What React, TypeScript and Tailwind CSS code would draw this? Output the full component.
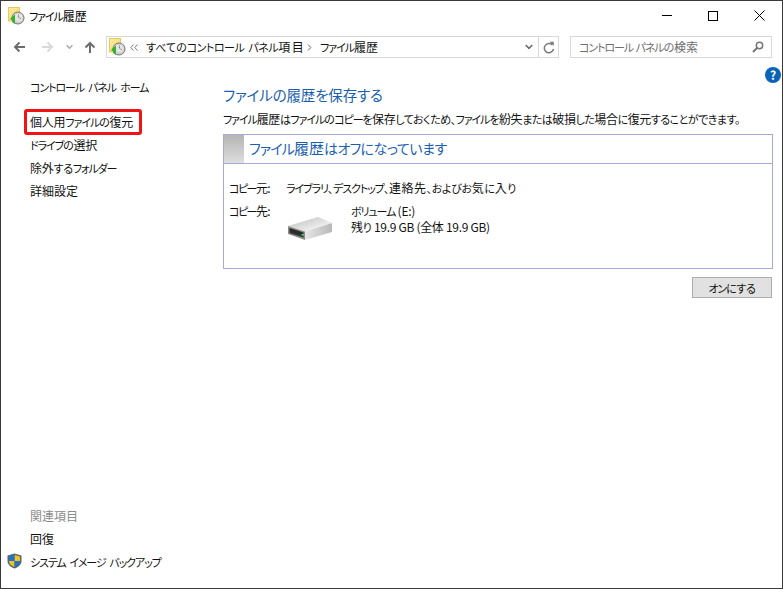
const font = { fontFamily: '"Noto Sans CJK JP", "Noto Sans", sans-serif' };

type Mode = "normal" | "big" | "tight" | "loose" | "para";

const kataClass: Record<Mode, string> = {
  normal: "text-[11px] tracking-[-1.1px]",
  big: "text-[14px] tracking-[-0.9px]",
  tight: "text-[11px] tracking-[-1.5px]",
  loose: "text-[11px] tracking-[-0.5px]",
  para: "text-[11px] tracking-[-1.1px]",
};
const hiraClass: Record<Mode, string> = {
  normal: "text-[11px] tracking-[-0.3px]",
  big: "text-[14px] tracking-[-0.4px]",
  tight: "text-[11px] tracking-[-0.3px]",
  loose: "text-[11px] tracking-[0px]",
  para: "text-[11px] tracking-[-0.5px]",
};

function J({ text, mode = "normal" }: { text: string; mode?: Mode }) {
  const parts = text.split(/([\u30A0-\u30FF]+|[\u3040-\u309F、。]+)/).filter(Boolean);
  return (
    <>
      {parts.map((p, i) => {
        if (/^[\u30A0-\u30FF]/.test(p)) return <span key={i} className={kataClass[mode]}>{p}</span>;
        if (/^[\u3040-\u309F、。]/.test(p)) return <span key={i} className={hiraClass[mode]}>{p}</span>;
        return <span key={i}>{p}</span>;
      })}
    </>
  );
}

function FolderIcon() {
  return (
    <svg width="17" height="18" viewBox="0 0 17 18" className="shrink-0">
      <defs>
        <linearGradient id="fold" x1="0" y1="0" x2="1" y2="1">
          <stop offset="0" stopColor="#fdeea6" />
          <stop offset="1" stopColor="#f7d45f" />
        </linearGradient>
      </defs>
      <rect x="0.5" y="0.5" width="11" height="13.5" fill="url(#fold)" stroke="#e8c860" />
      <circle cx="10" cy="11" r="6" fill="#cfcfcf" stroke="#777" />
      <circle cx="10.5" cy="10.5" r="4" fill="#e4e4e4" />
      <path d="M10.5 7.5v3l2.2 1.2" fill="none" stroke="#666" strokeWidth="0.9" strokeDasharray="1 0.6" />
      <path d="M2.5 11.5 7 8V10c-1.6.4-2 2-1 4.5 .2 1 1.2 2 2.5 2.3-3 .4-4.7-1.7-4.6-4.2Z" fill="#2aa52a" />
      <path d="M2 12 7 7.8V15Z" fill="#33b233" />
    </svg>
  );
}

function Arrow({ dir, color }: { dir: "l" | "r" | "u"; color: string }) {
  const d = dir === "l" ? "M12 6H2M6.5 1.5 2 6l4.5 4.5" : dir === "r" ? "M0 6h10M5.5 1.5 10 6l-4.5 4.5" : "M6 12V2M1.5 6.5 6 2l4.5 4.5";
  return (
    <svg width="12" height="12" viewBox="0 0 12 12" className="shrink-0">
      <path d={d} fill="none" stroke={color} strokeWidth="2" />
    </svg>
  );
}

function Chevron({ color, w = 8 }: { color: string; w?: number }) {
  return (
    <svg width={w} height="6" viewBox="0 0 8 6" className="shrink-0">
      <path d="M0.7 1 4 4.3 7.3 1" fill="none" stroke={color} strokeWidth="1.6" />
    </svg>
  );
}

function Drive() {
  return (
    <svg width="44" height="23" viewBox="0 0 44 23" className="shrink-0">
      <defs>
        <linearGradient id="dtop" x1="0" y1="0" x2="1" y2="1">
          <stop offset="0" stopColor="#b9b9b9" />
          <stop offset="0.7" stopColor="#ededed" />
          <stop offset="1" stopColor="#f6f6f6" />
        </linearGradient>
        <linearGradient id="dfront" x1="0" y1="0" x2="1" y2="0">
          <stop offset="0" stopColor="#e6e6e6" />
          <stop offset="1" stopColor="#b8b8b8" />
        </linearGradient>
      </defs>
      <path d="M0 9 30 0 44 6 17 14.5Z" fill="url(#dtop)" />
      <path d="M17 14.5 44 6 V15 L17 23Z" fill="url(#dfront)" />
      <path d="M0 9 17 14.5 V23 L0 17Z" fill="#8d8d8d" />
      <path d="M1.5 11 15.5 15.5 V20.5 L1.5 16Z" fill="#2b2b2b" />
      <path d="M3 15 15.5 19V20.5L1.5 16V12Z" fill="#444" opacity="0.5" />
      <path d="M13.5 17h2.5v1.6h-2.5z" fill="#3fdc55" />
    </svg>
  );
}

function Shield() {
  return (
    <svg width="15" height="16" viewBox="0 0 15 16" className="shrink-0">
      <path d="M7.5 0.5 14.5 2.5V8c0 3.5-3 6-7 7.5C3.5 14 .5 11.5.5 8V2.5Z" fill="#5a6470" />
      <path d="M7.5 2 13 3.5V8H7.5Z" fill="#f2c31c" />
      <path d="M2 3.5 7.5 2V8H2Z" fill="#1d74c9" />
      <path d="M2 8H7.5V14C4.5 12.8 2 11 2 8Z" fill="#f2c31c" />
      <path d="M7.5 8H13C13 11 10.5 12.8 7.5 14Z" fill="#1d74c9" />
    </svg>
  );
}

export default function App() {
  return (
    <div
      style={font}
      className="w-[783px] h-[589px] bg-white border border-[#3a3a3a] flex flex-col overflow-hidden text-[12px] leading-[16px] text-[#111] [font-feature-settings:'palt']"
    >
      <div className="h-[29px] flex items-center pl-[7px] shrink-0">
        <FolderIcon />
        <span className="ml-[4px] text-[12px] text-black"><J text="ファイル履歴" /></span>
        <div className="ml-auto flex items-center">
          <div className="w-[46px] flex justify-center">
            <div className="w-[10px] h-px bg-black" />
          </div>
          <div className="w-[46px] flex justify-center">
            <div className="w-[10px] h-[10px] border border-black" />
          </div>
          <div className="w-[46px] flex justify-center">
            <svg width="11" height="11" viewBox="0 0 11 11">
              <path d="M.5.5l10 10M10.5.5l-10 10" stroke="#000" fill="none" />
            </svg>
          </div>
        </div>
      </div>

      <div className="h-[22px] mt-[6px] flex items-center shrink-0">
        <div className="ml-[12px] flex items-center w-[93px]">
          <Arrow dir="l" color="#6d6d6d" />
          <div className="ml-[17px]"><Arrow dir="r" color="#d9d9d9" /></div>
          <div className="ml-[12px]"><Chevron color="#a8a8a8" w={7} /></div>
          <div className="ml-[11px]"><Arrow dir="u" color="#6d6d6d" /></div>
        </div>
        <div className="w-[453px] h-[22px] border border-[#d9d9d9] flex items-center">
          <div className="ml-[2px]"><FolderIcon /></div>
          <svg className="ml-[4px] shrink-0" width="8" height="7" viewBox="0 0 8 7">
            <path d="M3.5 .5.8 3.5l2.7 3M7.5 .5 4.8 3.5l2.7 3" fill="none" stroke="#777" />
          </svg>
          <span className="ml-[8px] text-[12px] tracking-[1.5px]"><J mode="loose" text="すべてのコントロール パネル項目" /></span>
          <svg className="ml-[2px] shrink-0" width="5" height="7" viewBox="0 0 5 7">
            <path d="M1 .5 3.8 3.5 1 6.5" fill="none" stroke="#666" />
          </svg>
          <span className="ml-[8px]"><J text="ファイル履歴" /></span>
          <div className="ml-auto h-full flex items-center">
            <Chevron color="#6d6d6d" w={8} />
            <div className="ml-[5px] w-[20px] h-full border-l border-[#d9d9d9] flex items-center justify-center">
              <svg width="12" height="13" viewBox="0 0 12 13">
                <path d="M9.3 4A4.6 4.6 0 1 0 10.5 8" fill="none" stroke="#7a7a7a" strokeWidth="1.5" />
                <path d="M6.5 0.8h4.2V5Z" fill="#7a7a7a" />
              </svg>
            </div>
          </div>
        </div>
        <div className="ml-[11px] w-[202px] h-[22px] border border-[#d9d9d9] flex items-center pl-[8px] pr-[7px]">
          <span className="text-[#6d6d6d]"><J text="コントロール パネルの検索" /></span>
          <svg className="ml-auto" width="12" height="12" viewBox="0 0 12 12">
            <circle cx="7.5" cy="4.5" r="3.2" fill="none" stroke="#777" strokeWidth="1.5" />
            <path d="M5 7 1 11" stroke="#777" strokeWidth="2" />
          </svg>
        </div>
      </div>

      <div className="flex-1 flex relative">
        <aside className="w-[222px] shrink-0 pl-[29px] flex flex-col pt-[17px] pb-[15px]">
          <div className="h-[23px] flex items-center"><span className="tracking-[1.5px]"><J text="コントロール パネル ホーム" /></span></div>
          <div className="relative mt-[12px] h-[23px] flex items-center">
            <span className="tracking-[-0.2px]"><J text="個人用ファイルの復元" /></span>
            <div className="absolute left-[-6px] top-[-1px] w-[118px] h-[26px] border-[3px] border-[#f01414] rounded-[3px]" />
          </div>
          <div className="h-[23px] flex items-center"><span className="tracking-[-0.2px]"><J text="ドライブの選択" /></span></div>
          <div className="h-[23px] flex items-center"><span className="tracking-[-0.2px]"><J text="除外するフォルダー" /></span></div>
          <div className="h-[23px] flex items-center">詳細設定</div>
          <div className="mt-auto h-[23px] flex items-center text-[#8c8c8c]">関連項目</div>
          <div className="h-[23px] flex items-center">回復</div>
          <div className="h-[23px] flex items-center relative">
            <div className="absolute left-[-23px] top-[3px]"><Shield /></div>
            <span className="tracking-[1px]"><J text="システム イメージ バックアップ" /></span>
          </div>
        </aside>

        <main className="flex-1 pt-[27px] pr-[9px]">
          <h1 className="text-[14.5px] leading-[20px] text-[#1a5fb0] tracking-[-0.15px]">ファイルの履歴を保存する</h1>
          <p className="mt-[6px] whitespace-nowrap tracking-[-0.4px]"><J mode="para" text="ファイル履歴はファイルのコピーを保存しておくため、ファイルを紛失または破損した場合に復元することができます。" /></p>
          <section className="mt-[7px] h-[135px] border border-[#a9a9d8] flex flex-col">
            <div className="h-[29px] flex border-b border-[#a9a9d8] shrink-0">
              <div className="w-[20px] bg-gradient-to-b from-[#b4b4b4] to-[#dedede]" />
              <div className="ml-[5px] text-[15px] leading-[26px] text-[#1a5fb0]"><J mode="big" text="ファイル履歴はオフになっています" /></div>
            </div>
            <div className="mt-[16px] ml-[5px] flex">
              <div className="w-[57px] tracking-[-0.8px]"><J mode="tight" text="コピー元" />:</div>
              <div className="tracking-[0.5px]"><J text="ライブラリ、デスクトップ、連絡先、およびお気に入り" /></div>
            </div>
            <div className="mt-[7px] ml-[5px] flex">
              <div className="w-[59px] tracking-[-0.8px]"><J mode="tight" text="コピー先" />:</div>
              <div className="mt-[14px]"><Drive /></div>
              <div className="ml-[19px] mt-[0px] leading-[15px]">
                <div className="tracking-[-0.3px]"><J text="ボリューム" /> (E:)</div>
                <div className="tracking-[-0.3px]"><J text="残り 19.9 GB (全体 19.9 GB)" /></div>
              </div>
            </div>
          </section>
          <div className="flex justify-end mt-[8px] pr-px">
            <button className="w-[80px] h-[21px] bg-[#e1e1e1] border border-[#adadad] text-[12px] leading-[18px]"><J text="オンにする" /></button>
          </div>
        </main>

        <div className="absolute right-[1px] top-[9px] w-[16px] h-[16px] rounded-full bg-[#0a63b8] text-white text-[12px] leading-[16px] font-bold text-center">?</div>
      </div>
    </div>
  );
}
